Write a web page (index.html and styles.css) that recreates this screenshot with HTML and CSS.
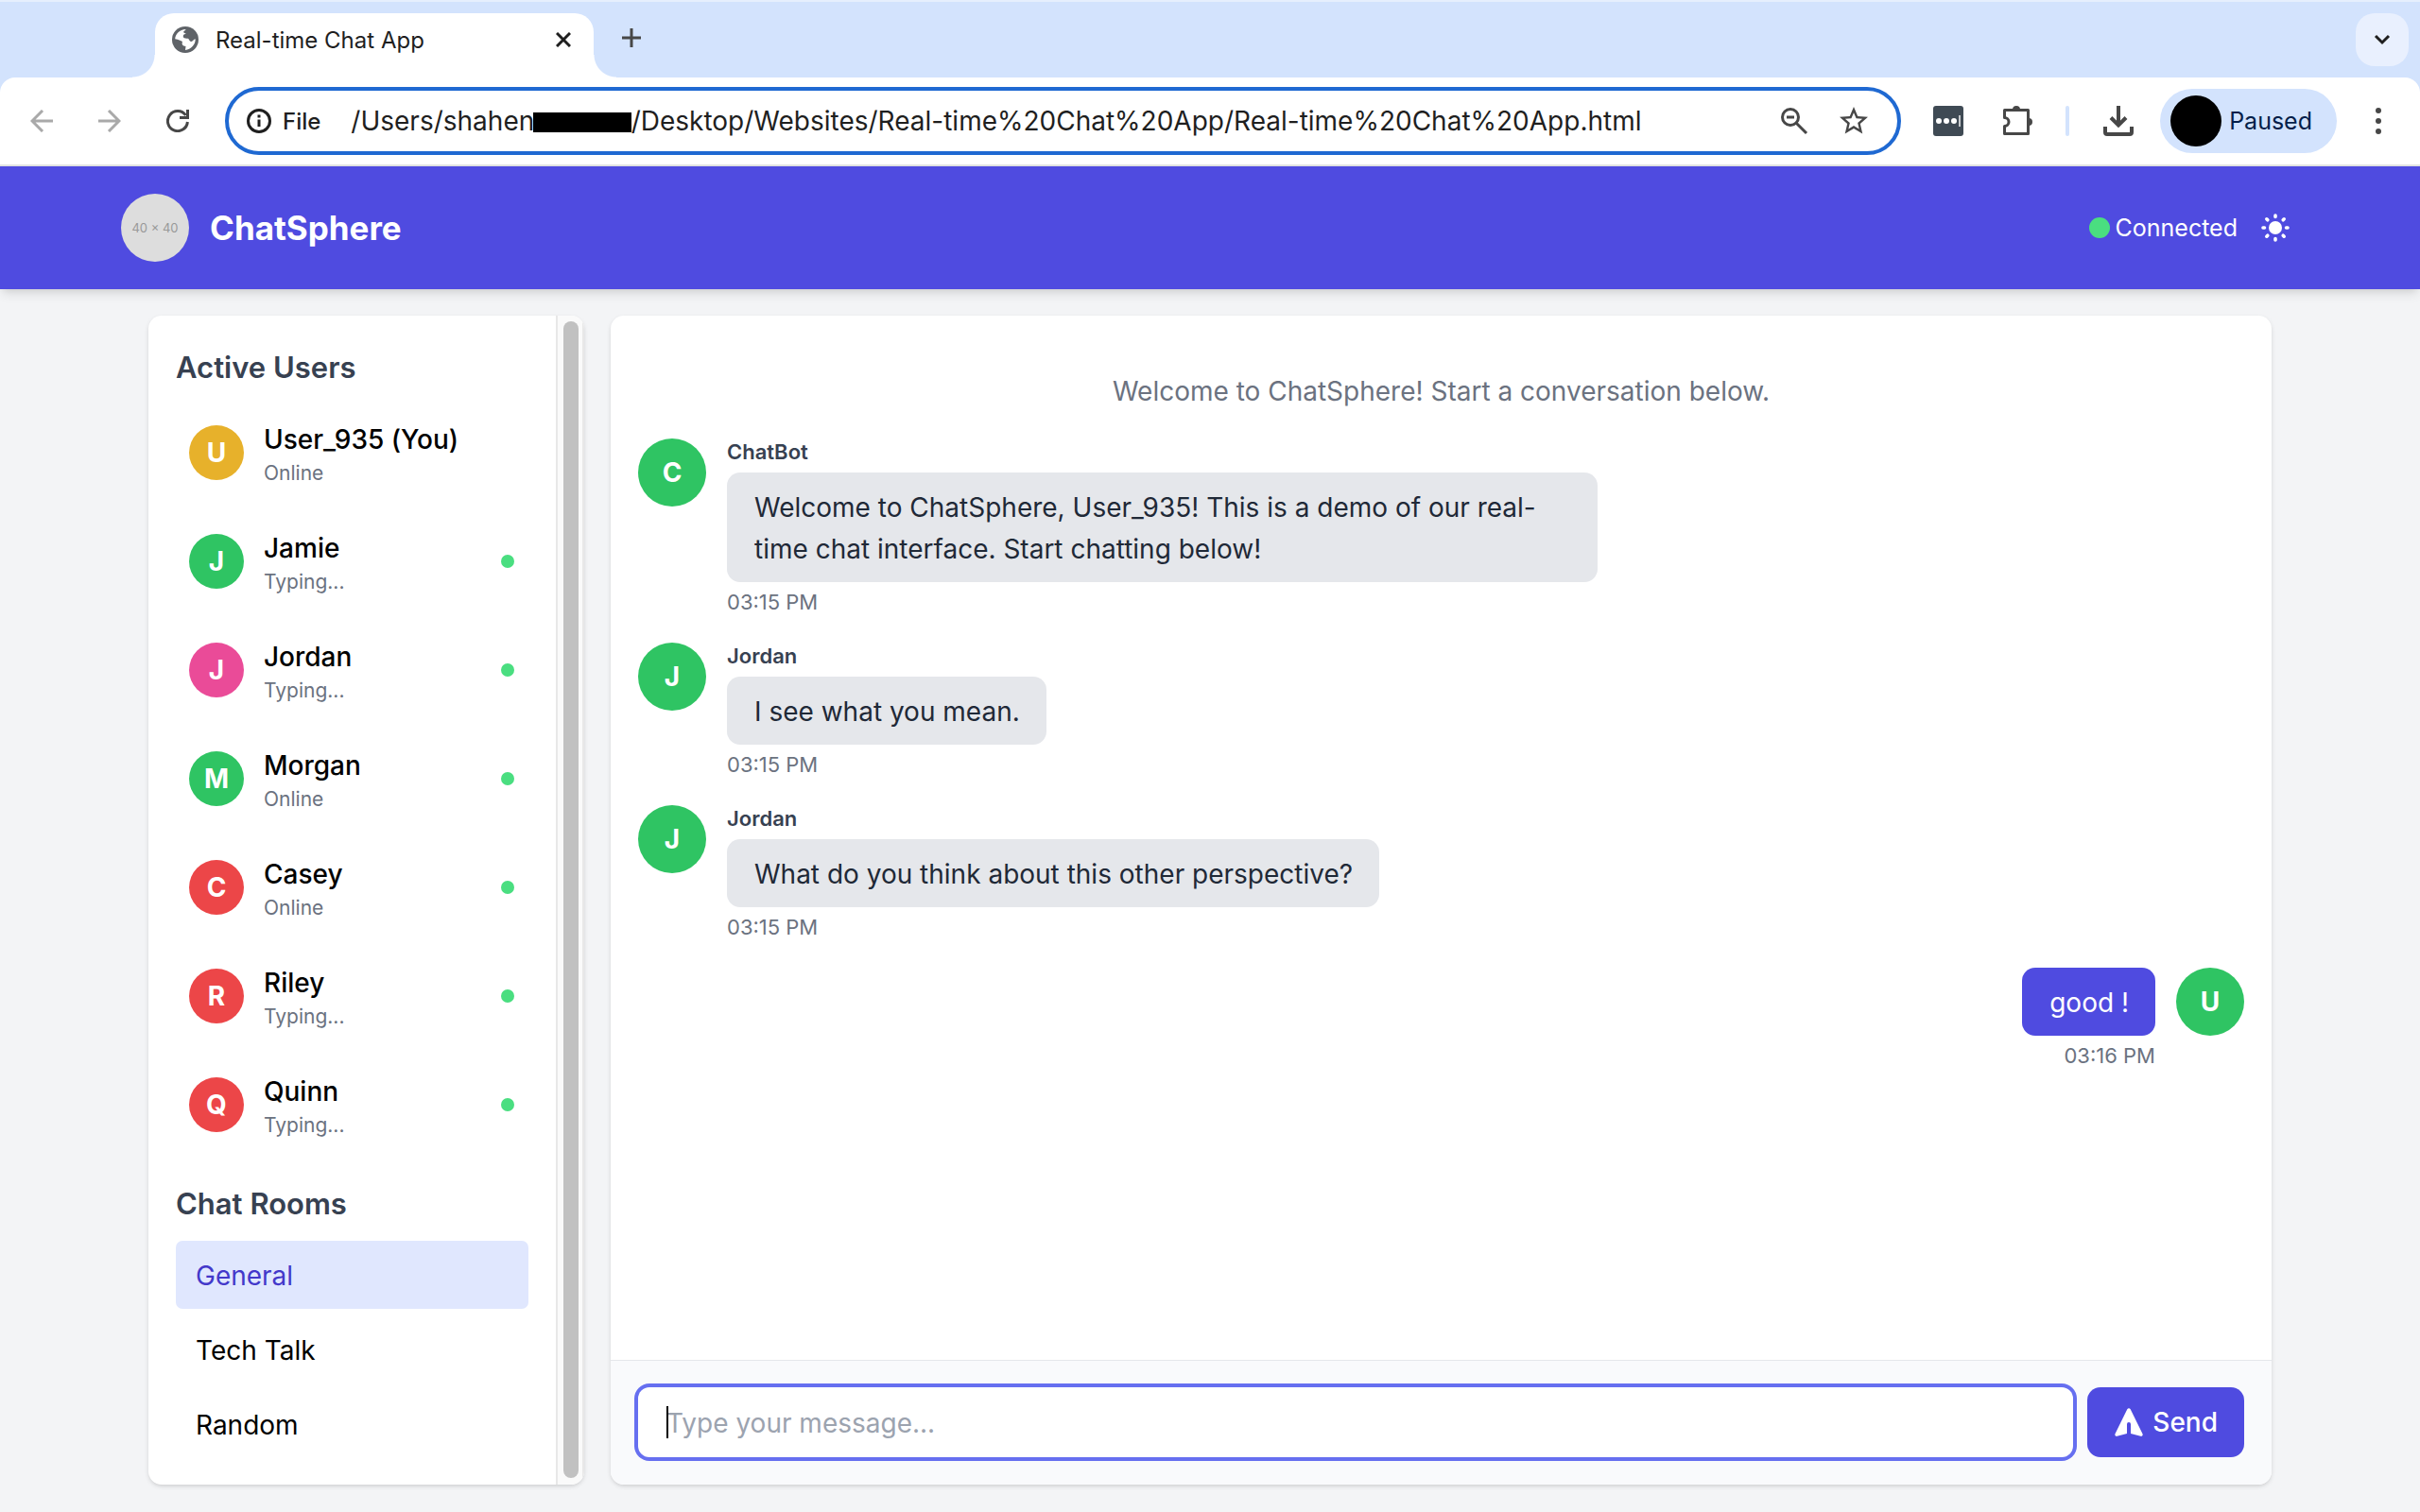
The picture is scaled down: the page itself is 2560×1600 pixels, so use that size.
FILE: index.html
```html
<!DOCTYPE html>
<html lang="en">
<head>
<meta charset="utf-8">
<title>Real-time Chat App</title>
<link rel="stylesheet" href="styles.css">
</head>
<body>
<div class="browser">
  <div class="tab-strip">
    <div class="tab">
      <svg class="icon-28" viewBox="0 0 28 28"><circle cx="14" cy="14" r="14" fill="#5f6368"/><path fill="#fff" d="M3.200 13.300C3.500 8 8 3.200 14.500 3C15 3.500 12.500 4.500 12 6C12.500 7 14 7 15 8C12 8 11.500 9.500 12 11.500C13 13 15 12.500 17 12.700C18.500 14 18.500 16 20.500 16C22 16 22.500 13.500 24.700 13.300C25 19 20 24.500 14 25L14.500 21C11 20.500 10 19 11 16C9 15.500 7 13.500 3.200 13.300z"/></svg>
      <span class="tab-title">Real-time Chat App</span>
      <button class="tab-close" aria-label="Close tab"><svg width="16" height="16" viewBox="0 0 16 16" stroke="#1f1f1f" stroke-width="3"><path d="M1 1l14 14M15 1L1 15"/></svg></button>
    </div>
    <button class="new-tab" aria-label="New tab"><svg width="20" height="20" viewBox="0 0 20 20" stroke="#474747" stroke-width="3"><path d="M10 0v20M0 10h20"/></svg></button>
    <button class="tab-search" aria-label="Search tabs"><svg width="18" height="12" viewBox="0 0 18 12" fill="none" stroke="#1f1f1f" stroke-width="3"><path d="M2 2l7 7 7-7"/></svg></button>
  </div>
  <div class="toolbar">
    <div class="nav">
      <button aria-label="Back"><svg width="24" height="24" viewBox="0 0 24 24" fill="none" stroke="#a9a9a9" stroke-width="3"><path d="M24 12H2M13 1L2 12l11 11"/></svg></button>
      <button aria-label="Forward"><svg width="24" height="24" viewBox="0 0 24 24" fill="none" stroke="#a9a9a9" stroke-width="3"><path d="M0 12h22M11 1l11 11-11 11"/></svg></button>
      <button aria-label="Reload"><svg width="24" height="24" viewBox="0 0 24 24" fill="none" stroke="#474747" stroke-width="3"><path d="M22.400 13A10.500 10.500 0 1 1 20.500 6"/><path d="M22.500 0v8.500H14"/></svg></button>
    </div>
    <div class="omnibox">
      <svg class="icon-28" viewBox="0 0 28 28" fill="none" stroke="#1f1f1f" stroke-width="3"><circle cx="14" cy="14" r="11.500"/><path d="M14 12.500v7.500M14 7.500v3"/></svg>
      <span class="scheme">File</span>
      <div class="url">
        <input type="text" aria-label="Address" value="/Users/shahen             /Desktop/Websites/Real-time%20Chat%20App/Real-time%20Chat%20App.html">
        <span class="redaction"></span>
      </div>
      <button aria-label="Zoom"><svg width="30" height="30" viewBox="0 0 30 30" fill="none" stroke="#474747" stroke-width="3"><circle cx="11" cy="11" r="8.500"/><path d="M17 17l11 11M7 11h8"/></svg></button>
      <button aria-label="Bookmark"><svg width="36" height="36" viewBox="0 0 24 24" fill="#474747"><path d="M22 9.240l-7.190-.620L12 2 9.190 8.630 2 9.240l5.460 4.730L5.820 21 12 17.270 18.180 21l-1.630-7.030L22 9.240zM12 15.400l-3.760 2.270 1-4.280-3.320-2.880 4.380-.380L12 6.100l1.710 4.040 4.380.380-3.320 2.880 1 4.280L12 15.400z"/></svg></button>
    </div>
    <div class="tools">
      <button aria-label="Password manager"><svg width="32" height="32" viewBox="0 0 32 32"><rect width="32" height="32" rx="3" fill="#3f4a54"/><g fill="#fff"><circle cx="6" cy="16" r="3"/><circle cx="14" cy="16" r="3"/><circle cx="22" cy="16" r="3"/><path d="M27 10h2v12h-2z" fill="#c5c9cc"/></g></svg></button>
      <button aria-label="Extensions"><svg width="34" height="34" viewBox="0 0 34 34"><path d="M3.500 5.500h25v25h-25v-8a4.500 4.500 0 0 0 0-9z" fill="none" stroke="#474747" stroke-width="3" stroke-linejoin="round"/><path d="M12 5a4 4 0 0 1 8 0zM29 14a4 4 0 0 1 0 8z" fill="#474747"/></svg></button>
      <span class="divider"></span>
      <button aria-label="Downloads"><svg width="32" height="32" viewBox="0 0 32 32" fill="none" stroke="#474747" stroke-width="4"><path d="M16 0v20M8 12.500l8 8 8-8M2 22v6q0 2 2 2h24q2 0 2-2v-6"/></svg></button>
    </div>
    <button class="profile"><span class="profile-pic"></span>Paused</button>
    <button class="menu" aria-label="Menu"><svg width="6" height="28" viewBox="0 0 6 28" fill="#474747"><circle cx="3" cy="3" r="3"/><circle cx="3" cy="14" r="3"/><circle cx="3" cy="25" r="3"/></svg></button>
  </div>
</div>

<header class="app-header">
  <div class="header-inner">
    <span class="logo">40 × 40</span>
    <h1>ChatSphere</h1>
    <span class="status"><span class="status-dot"></span>Connected</span>
    <button class="theme" aria-label="Toggle theme"><svg width="30" height="30" viewBox="0 0 30 30" stroke="#fff" stroke-width="3.600" stroke-linecap="round"><circle cx="15" cy="15" r="7" fill="#fff" stroke="none"/><path d="M15 2v1.500M15 26.500V28M2 15h1.500M26.500 15H28M5.800 5.800l1 1M23.200 23.200l1 1M5.800 24.200l1-1M23.200 6.800l1-1"/></svg></button>
  </div>
</header>

<main>
  <aside class="card sidebar">
    <div class="sidebar-body">
      <h2>Active Users</h2>
      <ul class="users">
        <li><span class="avatar amber">U</span><div><p class="name">User_935 (You)</p><p class="presence">Online</p></div></li>
        <li><span class="avatar">J</span><div><p class="name">Jamie</p><p class="presence">Typing...</p></div><span class="dot"></span></li>
        <li><span class="avatar pink">J</span><div><p class="name">Jordan</p><p class="presence">Typing...</p></div><span class="dot"></span></li>
        <li><span class="avatar">M</span><div><p class="name">Morgan</p><p class="presence">Online</p></div><span class="dot"></span></li>
        <li><span class="avatar red">C</span><div><p class="name">Casey</p><p class="presence">Online</p></div><span class="dot"></span></li>
        <li><span class="avatar red">R</span><div><p class="name">Riley</p><p class="presence">Typing...</p></div><span class="dot"></span></li>
        <li><span class="avatar red">Q</span><div><p class="name">Quinn</p><p class="presence">Typing...</p></div><span class="dot"></span></li>
      </ul>
      <h2>Chat Rooms</h2>
      <nav class="rooms">
        <a class="active" href="#general">General</a>
        <a href="#tech-talk">Tech Talk</a>
        <a href="#random">Random</a>
      </nav>
    </div>
    <div class="scrollbar"><span class="thumb"></span></div>
  </aside>

  <section class="card chat">
    <div class="messages">
      <p class="intro">Welcome to ChatSphere! Start a conversation below.</p>
      <article class="message">
        <span class="avatar large">C</span>
        <div class="content"><p class="small sender">ChatBot</p><p class="bubble">Welcome to ChatSphere, User_935! This is a demo of our real-time chat interface. Start chatting below!</p><time class="small">03:15 PM</time></div>
      </article>
      <article class="message">
        <span class="avatar large">J</span>
        <div class="content"><p class="small sender">Jordan</p><p class="bubble">I see what you mean.</p><time class="small">03:15 PM</time></div>
      </article>
      <article class="message">
        <span class="avatar large">J</span>
        <div class="content"><p class="small sender">Jordan</p><p class="bubble">What do you think about this other perspective?</p><time class="small">03:15 PM</time></div>
      </article>
      <article class="message own">
        <span class="avatar large">U</span>
        <div class="content"><p class="bubble">good !</p><time class="small">03:16 PM</time></div>
      </article>
    </div>
    <form class="composer">
      <div class="field">
        <input type="text" aria-label="Message" placeholder="Type your message...">
        <span class="caret"></span>
      </div>
      <button class="send" type="button"><svg width="30" height="30" viewBox="0 0 30 30" fill="#fff"><path d="M13.300 1.300a2 2 0 0 1 3.400 0l12.800 26a1.700 1.700 0 0 1-2 2.400L17 27V17a2 2 0 0 0-4 0v10L2.500 29.700a1.700 1.700 0 0 1-2-2.400z"/></svg>Send</button>
    </form>
  </section>
</main>
</body>
</html>
```
FILE: styles.css
```css
* { box-sizing: border-box; margin: 0; padding: 0; }

body {
  display: flex;
  flex-direction: column;
  min-height: 100vh;
  background: #f3f4f6;
  color: #000;
  font: 28px/43px Inter, "Liberation Sans", sans-serif;
}

button, input { font: inherit; color: inherit; border: 0; background: none; outline: 0; }
button { display: flex; align-items: center; justify-content: center; flex: none; }
ul { list-style: none; }
svg { display: block; flex: none; }
a { color: inherit; text-decoration: none; }
.icon-28 { width: 28px; height: 28px; }

/* Browser frame */
.browser { background: #d3e3fd; color: #1f1f1f; border-top: 2px solid #e6effd; }

.tab-strip { display: flex; align-items: flex-end; height: 80px; padding: 0 12px 0 164px; }

.tab {
  position: relative;
  display: flex;
  align-items: center;
  width: 464px;
  height: 68px;
  padding: 0 24px 12px 18px;
  border-radius: 20px 20px 0 0;
  background: #fff;
  font-size: 24px;
}
.tab::before, .tab::after {
  content: "";
  position: absolute;
  bottom: 0;
  width: 24px;
  height: 24px;
}
.tab::before { right: 100%; background: radial-gradient(circle at 0 0, #d3e3fd 23px, #fff 24px); }
.tab::after { left: 100%; background: radial-gradient(circle at 100% 0, #d3e3fd 23px, #fff 24px); }
.tab-title { flex: 1; padding-left: 18px; }
.new-tab { height: 84px; margin-left: 30px; }
.tab-search {
  align-self: center;
  width: 56px;
  height: 56px;
  margin-left: auto;
  border-radius: 20px;
  background: #e9f0fe;
}

.toolbar {
  display: flex;
  align-items: center;
  height: 94px;
  padding: 0 41px 0 32px;
  border-bottom: 2px solid #e1e3e1;
  border-radius: 16px 16px 0 0;
  background: #fff;
}
.nav { display: flex; gap: 48px; }
.omnibox {
  display: flex;
  flex: 1;
  align-items: center;
  height: 72px;
  margin: 0 34px 0 38px;
  padding: 0 28px 0 18px;
  border: 4px solid #1f69d2;
  border-radius: 36px;
}
.scheme { padding: 0 32px 0 11px; font-size: 24px; font-weight: 500; }
.url { position: relative; flex: 1; }
.url input { display: block; width: 100%; }
.redaction { position: absolute; left: 193px; top: 12px; width: 104px; height: 21px; background: #000; }
.omnibox button + button { margin-left: 30px; }
.tools { display: flex; align-items: center; }
.tools button + button { margin-left: 40px; }
.divider { width: 4px; height: 32px; margin: 0 36px 0 34px; border-radius: 2px; background: #d3e3fd; }
.profile {
  gap: 8px;
  height: 68px;
  margin: 0 41px 0 28px;
  padding: 0 26px 0 11px;
  border-radius: 34px;
  background: #d3e3fd;
  color: #041e49;
  font-size: 25px;
}
.profile-pic { width: 54px; height: 54px; border-radius: 50%; background: #000; }

/* App header */
.app-header {
  background: #4f4be0;
  color: #fff;
  box-shadow: 0 7px 11px -2px rgba(0, 0, 0, .1), 0 4px 7px -4px rgba(0, 0, 0, .1);
}
.header-inner {
  display: flex;
  align-items: center;
  max-width: 2304px;
  margin: 0 auto;
  padding: 29px 10px 29px 0;
}
.logo {
  width: 72px;
  height: 72px;
  border-radius: 50%;
  background: #ddd;
  color: #999;
  font-size: 13px;
  line-height: 72px;
  text-align: center;
}
h1 { margin-left: 22px; font-size: 35px; line-height: 50px; font-weight: 700; }
.status { display: flex; align-items: center; gap: 6px; margin-left: auto; font-size: 25px; }
.status-dot { width: 22px; height: 22px; border-radius: 50%; background: #4ade80; }
.theme { margin-left: 25px; }

/* Layout */
main {
  display: flex;
  flex: 1;
  gap: 28px;
  width: 100%;
  max-width: 2304px;
  margin: 0 auto;
  padding: 28px 29px 29px;
}
.card {
  display: flex;
  overflow: hidden;
  border-radius: 14px;
  background: #fff;
  box-shadow: 0 2px 5px rgba(0, 0, 0, .1), 0 2px 4px -2px rgba(0, 0, 0, .1);
}

/* Sidebar */
.sidebar { flex: none; width: 461px; }
.sidebar-body { flex: 1; padding: 29px 29px 28px; }
h2 { margin-bottom: 14px; color: #374151; font-size: 31px; line-height: 51px; font-weight: 600; }
.users { display: flex; flex-direction: column; gap: 14px; margin-bottom: 29px; }
.users li { display: flex; align-items: center; gap: 21px; height: 101px; padding: 14px 15px 14px 14px; }
.name { font-weight: 500; line-height: 44px; }
.presence { color: #6b7280; font-size: 21px; line-height: 28px; }
.small { color: #6b7280; font-size: 22px; line-height: 29px; }
.dot { width: 14px; height: 14px; margin-left: auto; border-radius: 50%; background: #4ade80; }
.avatar {
  flex: none;
  width: 58px;
  height: 58px;
  border-radius: 50%;
  background: #2fc463;
  color: #fff;
  font-weight: 700;
  line-height: 58px;
  text-align: center;
}
.amber { background: #e7b12b; }
.pink { background: #ea4b98; }
.red { background: #ec4648; }
.rooms { display: flex; flex-direction: column; gap: 7px; }
.rooms a { padding: 16px 21px 13px; border-radius: 7px; }
.rooms .active { background: #e0e7fe; color: #4338ca; }
.scrollbar { display: flex; width: 30px; padding: 6px 4px 7px 6px; border: solid #e8e8e8; border-width: 0 2px; background: #fafafa; }
.thumb { width: 16px; border-radius: 8px; background: #c1c1c1; }

/* Chat */
.chat { flex: 1; flex-direction: column; }
.messages { display: flex; flex: 1; flex-direction: column; gap: 28px; padding: 29px; }
.intro { padding-top: 30px; color: #6b7280; text-align: center; }
.message { display: flex; gap: 22px; }
.own { flex-direction: row-reverse; }
.content { display: flex; flex-direction: column; align-items: flex-start; gap: 7px; }
.own .content { align-items: flex-end; }
.avatar.large { width: 72px; height: 72px; line-height: 72px; }
.sender { color: #374151; font-weight: 600; }
.bubble { max-width: 921px; padding: 15px 28px 13px 29px; border-radius: 14px; background: #e5e7eb; color: #1f2937; line-height: 44px; }
.own .bubble { background: #4f4be0; color: #fff; }

.composer { display: flex; gap: 15px; padding: 28px 29px 29px; border-top: 1px solid #e5e7eb; background: #f9fafc; }
.field { position: relative; flex: 1; }
.field input {
  display: block;
  width: 100%;
  height: 74px;
  padding: 2px 30px 0;
  border-radius: 12px;
  background: #fff;
  box-shadow: 0 0 0 4px #666ff0;
}
.field input::placeholder { color: #9ca3af; }
.caret { position: absolute; left: 30px; top: 20px; width: 2px; height: 34px; background: #000; }
.send { gap: 10px; padding: 0 28px 0 29px; border-radius: 14px; background: #4f4be0; color: #fff; font-weight: 500; }
```
